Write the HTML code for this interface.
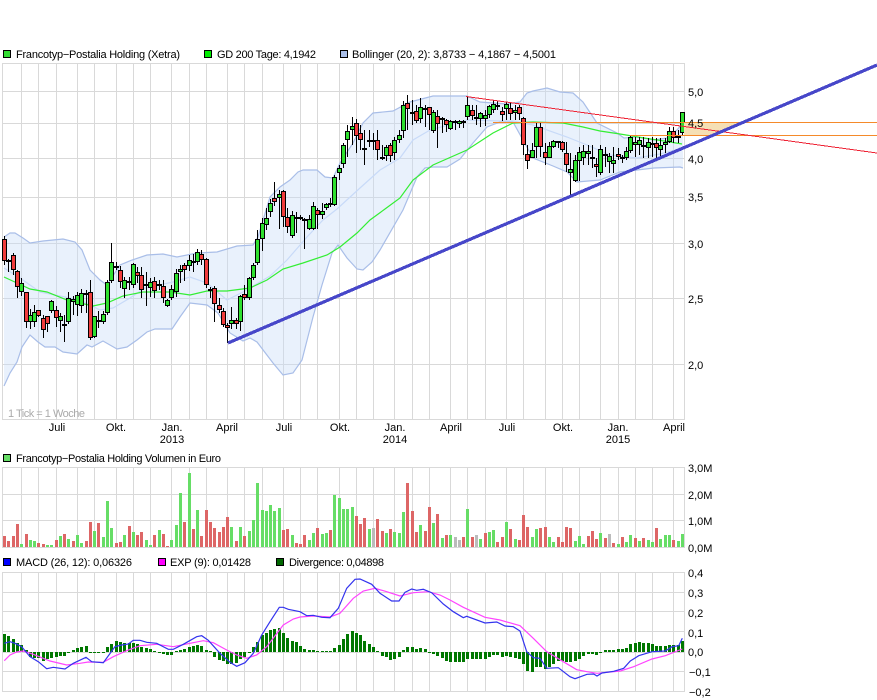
<!DOCTYPE html>
<html lang="de">
<head>
<meta charset="utf-8">
<title>Francotyp-Postalia Holding Chart</title>
<style>
html,body{margin:0;padding:0;background:#fff;width:877px;height:700px;overflow:hidden}
svg{display:block}
text{font-family:"Liberation Sans",Arial,sans-serif;font-size:11px;fill:#000}
.l{stroke:#000;stroke-width:1}
</style>
</head>
<body>
<svg id="c" xmlns="http://www.w3.org/2000/svg" width="877" height="700" viewBox="0 0 877 700">
<g id="grid"></g>
<path fill="rgba(200,220,248,.4)" stroke="none" d="M4 237L10 233L15 233L23 238L30 243L43 241L63 239L75 242L82 250L90 270L100 280L107 285L120 265L132 260L147 255L163 254L177 257L197 253L217 252L237 246L253 245L258 237L270 197L280 187L290 180L298 172L303 170L317 170L325 177L333 178L340 163L353 143L363 123L373 113L393 111L410 102L433 96L467 96L480 102L507 104L520 102L527 93L533 91L547 88L560 92L573 93L583 102L597 123L617 133L624 138L637 137L654 140L667 138L677 130L683 123L683 168L680 167L654 168L620 172L600 180L577 182L567 172L553 166L533 158L513 122L500 122L487 127L473 143L460 159L447 167L433 167L425 168L417 177L403 210L380 250L372 262L363 270L357 269L347 258L338 245L332 253L322 285L313 317L302 360L293 373L283 375L273 363L257 342L250 338L243 341L230 333L218 313L207 305L190 303L180 317L172 329L155 329L147 332L137 340L127 347L117 349L103 341L92 347L87 345L77 354L63 352L55 347L45 347L38 342L30 335L22 347L17 362L10 373L4 386Z"/>
<path fill="none" stroke="#a9bee8" stroke-width="1.2" d="M4 237L10 233L15 233L23 238L30 243L43 241L63 239L75 242L82 250L90 270L100 280L107 285L120 265L132 260L147 255L163 254L177 257L197 253L217 252L237 246L253 245L258 237L270 197L280 187L290 180L298 172L303 170L317 170L325 177L333 178L340 163L353 143L363 123L373 113L393 111L410 102L433 96L467 96L480 102L507 104L520 102L527 93L533 91L547 88L560 92L573 93L583 102L597 123L617 133L624 138L637 137L654 140L667 138L677 130L683 123"/>
<path fill="none" stroke="#a9bee8" stroke-width="1.2" d="M4 386L10 373L17 362L22 347L30 335L38 342L45 347L55 347L63 352L77 354L87 345L92 347L103 341L117 349L127 347L137 340L147 332L155 329L172 329L180 317L190 303L207 305L218 313L230 333L243 341L250 338L257 342L273 363L283 375L293 373L302 360L313 317L322 285L332 253L338 245L347 258L357 269L363 270L372 262L380 250L403 210L417 177L425 168L433 167L447 167L460 159L473 143L487 127L500 122L513 122L533 158L553 166L567 172L577 182L600 180L620 172L654 168L680 167L683 168"/>
<path fill="none" stroke="#c8daf8" stroke-width="1.2" d="M4 268L20 278L40 292L60 296L80 300L100 310L113 308L130 298L145 288L173 282L190 277L207 283L227 300L243 292L270 276L287 260L307 237L323 220L337 209L360 188L380 170L400 158L413 140L430 130L467 120L500 121L513 121L533 125L567 137L587 145L610 155L637 158L660 154L683 148"/>
<path fill="none" stroke="#33ee33" stroke-width="1.2" d="M4 277L17 283L30 289L47 292L67 300L93 306L107 303L123 296L143 292L170 292L190 295L207 291L227 291L250 288L267 280L283 269L303 263L327 255L340 247L357 233L370 220L385 209L400 198L413 180L433 165L467 150L493 133L513 123L533 122L563 123L583 127L600 131L620 134L644 138L664 141L682 144"/>
<g id="candles"></g>
<polygon points="684,123 744,123 714,135 684,135" fill="#f5dfb4"/>
<path d="M493 122.5H877M630 135.5H877" stroke="#f58a2a" stroke-width="1" fill="none" shape-rendering="crispEdges"/>
<path d="M466 96.5L877 153" stroke="#ee2233" stroke-width="1" fill="none" shape-rendering="crispEdges"/>
<path d="M228 343L877 65" stroke="#4747c9" stroke-width="3.2" fill="none" shape-rendering="crispEdges"/>
<g id="vol"></g>
<g id="div"></g>
<path id="exp" fill="none" stroke="#ff44ff" stroke-width="1.2"/>
<path id="macd" fill="none" stroke="#3333ee" stroke-width="1.2"/>

<rect class="l" x="3.5" y="50.5" width="7" height="7" fill="#33dd33"/>
<text x="16" y="58" textLength="164" lengthAdjust="spacing">Francotyp−Postalia Holding (Xetra)</text>
<rect class="l" x="204.5" y="50.5" width="7" height="7" fill="#00ee00"/>
<text x="217" y="58" textLength="99" lengthAdjust="spacing">GD 200 Tage: 4,1942</text>
<rect class="l" x="340.5" y="50.5" width="7" height="7" fill="#a9bee8"/>
<text x="352" y="58" textLength="204" lengthAdjust="spacing">Bollinger (20, 2): 3,8733 − 4,1867 − 4,5001</text>

<text x="688" y="96">5,0</text><text x="688" y="127">4,5</text><text x="688" y="163">4,0</text><text x="688" y="201">3,5</text><text x="688" y="248">3,0</text><text x="688" y="303">2,5</text><text x="688" y="369">2,0</text>

<text x="8" y="417" style="fill:#aaa" textLength="77" lengthAdjust="spacing">1 Tick = 1 Woche</text>
<g text-anchor="middle">
<text x="57" y="431">Juli</text><text x="116" y="431">Okt.</text><text x="172" y="431">Jan.</text><text x="172" y="443">2013</text><text x="227" y="431">April</text><text x="284" y="431">Juli</text><text x="340" y="431">Okt.</text><text x="395" y="431">Jan.</text><text x="395" y="443">2014</text><text x="451" y="431">April</text><text x="507" y="431">Juli</text><text x="563" y="431">Okt.</text><text x="618" y="431">Jan.</text><text x="618" y="443">2015</text><text x="674" y="431">April</text>
</g>

<rect class="l" x="3.5" y="454.5" width="7" height="7" fill="#66dd66"/>
<text x="16" y="462" textLength="205" lengthAdjust="spacing">Francotyp−Postalia Holding Volumen in Euro</text>
<text x="688" y="472">3,0M</text><text x="688" y="499">2,0M</text><text x="688" y="525">1,0M</text><text x="688" y="552">0,0M</text>

<rect class="l" x="3.5" y="558.5" width="7" height="7" fill="#0000ff"/>
<text x="16" y="566" textLength="116" lengthAdjust="spacing">MACD (26, 12): 0,06326</text>
<rect class="l" x="158.5" y="558.5" width="7" height="7" fill="#ff00ff"/>
<text x="170" y="566" textLength="81" lengthAdjust="spacing">EXP (9): 0,01428</text>
<rect class="l" x="276.5" y="558.5" width="7" height="7" fill="#006600"/>
<text x="289" y="566" textLength="95" lengthAdjust="spacing">Divergence: 0,04898</text>
<text x="688" y="577">0,4</text><text x="688" y="597">0,3</text><text x="688" y="617">0,2</text><text x="688" y="637">0,1</text><text x="688" y="656">0,0</text><text x="689" y="676">−0,1</text><text x="689" y="696">−0,2</text>
</svg>
<script>
(function(){
var NS="http://www.w3.org/2000/svg";
function el(parent,name,attrs){var e=document.createElementNS(NS,name);for(var k in attrs)e.setAttribute(k,attrs[k]);parent.appendChild(e);return e;}
function cx(i){return Math.floor(4.6+4.29*i);}

/* grid */
var g=document.getElementById("grid");
var vx=[2,21,38,56,77,94,116,133,150,171,189,206,227,244,262,283,300,317,339,356,373,394,412,429,450,467,485,506,523,545,562,579,600,618,635,652,673,684];
function panel(t,b,hs){
  vx.forEach(function(x){el(g,"line",{x1:x+.5,x2:x+.5,y1:t,y2:b+1,stroke:"#d9d9d9"});});
  hs.forEach(function(y){el(g,"line",{x1:2,x2:685,y1:y+.5,y2:y+.5,stroke:"#d9d9d9"});});
}
panel(63,419,[63,91,123,158,197,243,298,364,419]);
panel(467,547,[467,494,520,547]);
panel(572,691,[572,592,611,631,652,671,691]);

/* candles: high, body top, body bottom, low, type */
var D="236 239 261 265 r|259 260 260 272 d|253 255 270 275 r|270 271 287 298 r|278 283 292 296 g|292 292 322 328 r|309 315 322 329 g|305 312 322 327 g|310 310 316 317 r|315 318 330 338 r|316 316 324 332 r|300 301 311 313 g|306 310 318 327 r|313 316 321 332 g|315 324 326 342 g|292 298 322 324 g|296 299 302 315 g|292 295 305 316 g|289 293 306 313 g|290 293 293 313 d|280 292 338 340 r|316 316 337 338 g|311 320 320 328 d|311 314 322 324 g|280 282 313 315 g|243 262 281 283 g|262 266 266 270 d|266 270 282 288 r|277 280 289 298 g|277 281 283 290 r|263 264 285 288 g|267 272 276 283 r|267 275 290 298 r|272 284 284 306 d|278 282 288 297 g|277 281 291 298 r|280 284 286 290 g|280 286 298 303 r|299 300 306 307 g|285 289 298 300 g|269 273 292 297 g|265 269 272 283 g|263 265 270 281 r|255 260 266 271 g|254 261 261 272 d|249 252 262 265 g|250 254 260 265 r|258 259 285 288 r|287 289 289 298 d|286 288 304 322 r|298 305 310 313 r|308 311 325 327 r|323 325 328 343 r|307 320 324 329 g|318 320 324 329 r|295 296 322 331 g|285 294 298 300 r|277 278 298 300 g|263 265 278 280 g|230 239 263 265 g|218 223 239 251 g|208 218 225 230 g|199 203 212 217 g|182 198 202 206 r|190 194 198 229 g|190 191 217 227 r|208 217 227 233 r|211 215 236 238 g|212 217 217 233 d|215 217 217 220 d|218 219 221 249 r|215 219 229 230 g|202 206 229 230 g|208 210 215 229 r|203 211 215 219 g|203 204 208 210 g|198 203 205 207 r|175 177 205 206 g|165 168 173 180 g|143 145 164 168 g|125 131 140 157 g|117 126 130 145 g|119 123 136 153 r|125 133 140 150 r|130 148 148 165 d|130 140 142 147 r|133 140 140 150 d|130 140 150 160 r|145 157 157 160 d|145 147 156 161 g|143 145 156 162 r|137 140 153 160 g|130 135 140 143 g|101 105 131 138 g|95 103 109 130 r|100 112 112 125 d|105 111 121 123 r|98 107 119 123 g|105 108 110 127 r|107 107 115 130 r|110 112 131 133 g|110 116 124 148 r|117 118 118 133 d|119 120 125 132 r|120 121 129 130 g|120 121 121 130 d|120 121 124 128 g|120 121 123 128 g|97 105 117 120 g|105 110 116 120 r|105 117 117 125 d|112 113 119 127 g|110 115 119 126 g|105 106 115 118 g|100 104 110 113 g|101 105 105 110 d|107 111 115 121 r|102 104 109 120 g|103 108 114 120 r|105 110 113 120 g|105 107 114 120 r|117 118 145 155 r|145 154 161 169 r|143 150 158 158 g|122 127 147 158 g|122 127 147 157 r|143 152 158 165 r|142 146 158 158 g|140 141 147 148 g|141 141 141 148 d|141 142 150 152 r|142 153 165 172 r|153 169 173 195 g|155 160 181 182 g|147 152 161 181 g|145 151 158 165 g|145 151 154 165 g|145 157 158 168 d|158 164 167 177 r|145 149 173 175 g|147 154 156 167 r|153 156 162 173 g|147 160 164 173 g|148 154 157 160 r|155 157 157 163 d|147 151 158 160 g|135 137 151 153 g|137 142 145 157 g|137 140 145 155 g|137 145 147 158 g|138 142 148 158 g|137 143 143 157 d|138 143 148 158 r|138 145 150 157 g|138 142 145 153 g|127 131 142 143 g|127 131 138 143 r|130 136 136 143 d|112 112 133 135 g".split("|");
var cg=document.getElementById("candles");
D.forEach(function(s,i){
  var p=s.split(" "),h=+p[0],t=+p[1],b=+p[2],l=+p[3],k=p[4],x=cx(i);
  el(cg,"line",{x1:x+.5,x2:x+.5,y1:h,y2:l,stroke:"#000"});
  if(k=="d"){el(cg,"rect",{x:x-2,y:t,width:5,height:2,fill:"#000"});}
  else{el(cg,"rect",{x:x-1.5,y:t+.5,width:4,height:Math.max(b-t-1,1),fill:k=="g"?"#2fe02f":"#f03c3c",stroke:"#000"});}
});

/* volume: tops in 3x crop coordinates, y = 450 + top/3 */
var V=[258,273,258,222,282,252,270,273,279,282,285,285,270,258,252,267,273,255,279,273,216,243,219,261,153,234,279,276,255,228,246,255,246,270,285,255,240,252,288,270,225,129,216,69,237,180,258,180,216,234,246,231,201,231,273,231,258,243,210,99,180,183,165,183,174,240,237,255,279,282,255,270,249,234,252,249,240,135,144,177,177,171,198,222,204,237,234,207,243,249,237,246,249,186,99,183,246,225,243,171,219,192,264,255,255,261,270,261,177,261,255,267,249,246,240,276,261,216,237,267,270,195,231,261,237,234,231,261,276,261,276,231,234,273,258,282,258,243,267,249,264,252,279,282,261,276,255,264,273,264,270,276,234,267,255,255,270,273,252];
var C="rrrrgrggrr"+"ggrgrgrggr"+"rgrgggrrgr"+"grrggrgrrg"+"ggrgrgrrrr"+"rrrgrgrggg"+"gggggrrgrr"+"rggrggrggg"+"ggrrrgxrrg"+"rgggrrrgrr"+"grgrgxxrgr"+"xgrggrrgrg"+"rrrggrrggr"+"rrrgggrrrg"+"rxrgrggrgr"+"ggrgggrgg";
var col={g:"#66dd66",r:"#dd6666",x:"#bbbbbb"};
var vg=document.getElementById("vol");
V.forEach(function(t,i){
  var y=Math.round(450+t/3);
  el(vg,"rect",{x:cx(i)-1,y:y,width:3,height:547-y,fill:col[C.charAt(i)]||"#66dd66"});
});

/* divergence heights */
var H=[18,16,13,9,7,2,-5,-6,-6,-9,-7,-6,-5,-4,-4,-1,2,4,5,6,-1,-1,-1,-1,5,8,11,10,9,9,9,8,5,4,3,1,-1,-2,-3,-3,1,2,3,5,6,7,6,2,1,-5,-8,-9,-12,-12,-11,-7,-5,-1,5,10,17,19,22,23,24,19,14,11,10,6,3,2,2,1,1,1,1,4,7,13,18,21,19,17,11,8,5,1,-4,-5,-8,-7,-5,2,5,5,3,4,3,-1,-2,-4,-6,-9,-10,-10,-10,-10,-7,-7,-7,-7,-7,-5,-3,-3,-5,-4,-5,-6,-7,-12,-19,-20,-15,-15,-17,-15,-12,-9,-9,-10,-10,-9,-7,-4,-2,-2,-3,-1,2,2,2,3,3,4,8,9,10,9,9,8,6,6,6,7,7,7,11];
var dg=document.getElementById("div");
H.forEach(function(h,i){
  var y=h>0?652-h:652,hh=Math.abs(h);
  el(dg,"rect",{x:cx(i)-1,y:y,width:3,height:hh,fill:"#007700"});
});

/* MACD and EXP curves, each segment is in one crop's coordinates */
function curve(segs){
  var pts=[];
  segs.forEach(function(s){
    var a=s[2];
    for(var i=0;i<a.length;i+=2)pts.push((s[0]+a[i]/3).toFixed(1)+" "+(s[1]+a[i+1]/3).toFixed(1));
  });
  return "M"+pts.join("L");
}
document.getElementById("macd").setAttribute("d",curve([
[0,555,[13,265,30,260,45,265,65,275,90,305,115,320,140,341,160,337,195,342,220,325,258,307,275,320,310,323,345,275,365,270,385,267,400,256,420,256,440,262,470,265,505,283,520,283,550,268,590,245,605,242,625,256,660,295,690,322,710,334,735,323,760,295,785,240,810,200,838,157,850,157,865,163,900,170]],
[300,555,[20,182,40,181,65,187,90,188,115,160,140,100,165,73,180,72,215,88,240,115,275,138,297,138,315,112,335,102,350,106,370,103,395,113,430,147,460,170,490,188,500,184,555,204,590,201,615,213,640,215,660,228,680,290,700,308,720,310,740,340,775,338,810,365,825,371]],
[577,555,[30,358,50,357,60,363,75,354,110,349,140,340,160,318,185,302,225,290,265,288,285,275,305,272,316,250]]
]));
document.getElementById("exp").setAttribute("d",curve([
[0,555,[13,317,30,300,50,291,70,288,100,298,150,318,200,330,240,325,265,321,310,322,340,305,385,285,420,272,470,268,520,275,570,265,610,257,640,263,680,285,710,300,740,310,770,300,800,275,850,210,880,192,900,186]],
[300,555,[40,183,90,186,120,175,160,130,190,108,225,100,260,110,300,123,340,113,385,110,420,120,450,135,490,157,555,187,600,195,660,212,700,250,740,290,790,320,830,344]],
[577,555,[30,350,60,355,130,348,170,335,225,312,265,302,316,282]]
]));
})();
</script>
</body>
</html>
